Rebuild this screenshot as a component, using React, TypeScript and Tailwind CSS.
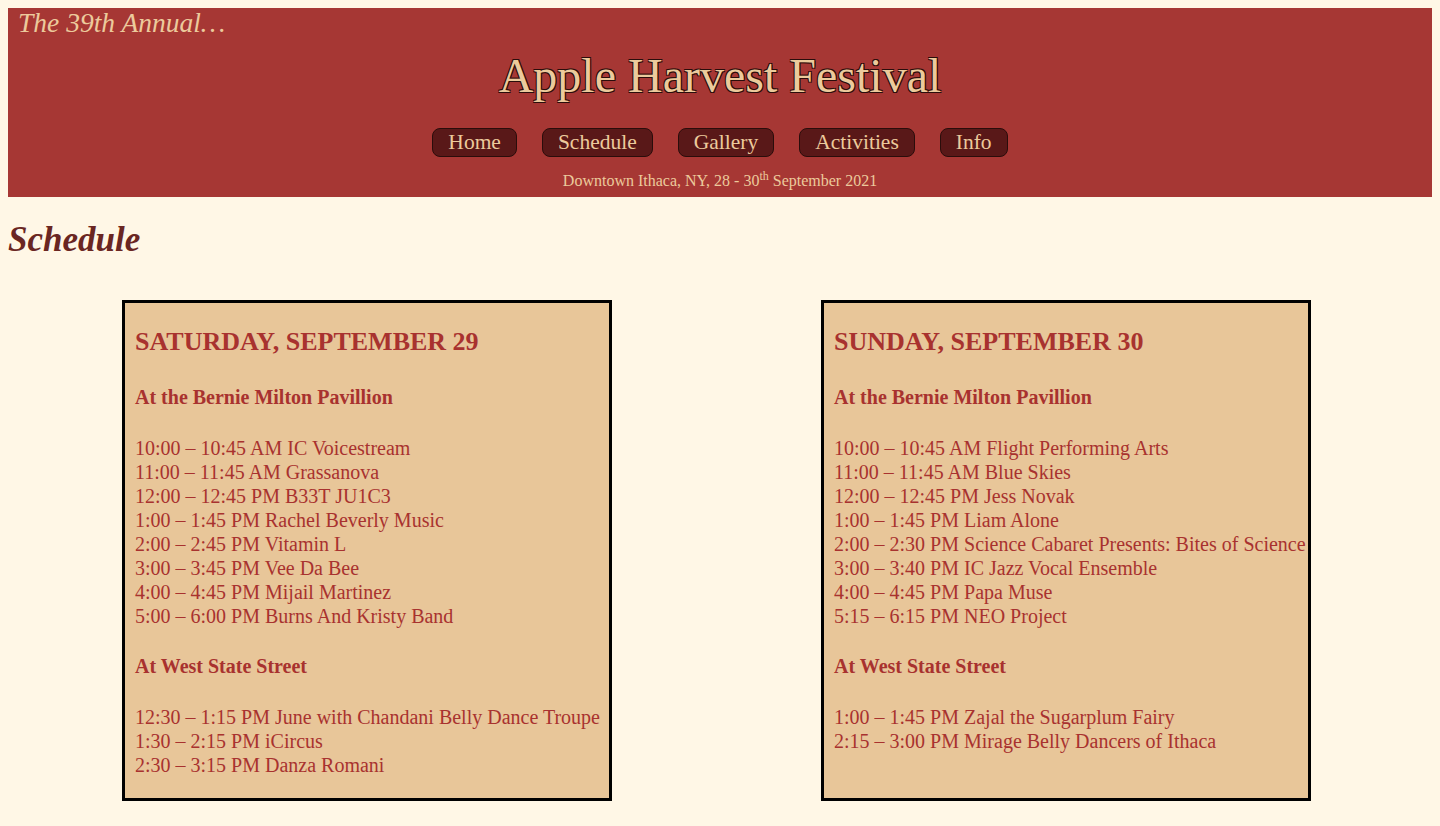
import React from "react"

const saturday = {
  title: "SATURDAY, SEPTEMBER 29",
  pavilion: [
    "10:00 – 10:45 AM IC Voicestream",
    "11:00 – 11:45 AM Grassanova",
    "12:00 – 12:45 PM B33T JU1C3",
    "1:00 – 1:45 PM Rachel Beverly Music",
    "2:00 – 2:45 PM Vitamin L",
    "3:00 – 3:45 PM Vee Da Bee",
    "4:00 – 4:45 PM Mijail Martinez",
    "5:00 – 6:00 PM Burns And Kristy Band",
  ],
  street: [
    "12:30 – 1:15 PM June with Chandani Belly Dance Troupe",
    "1:30 – 2:15 PM iCircus",
    "2:30 – 3:15 PM Danza Romani",
  ],
}

const sunday = {
  title: "SUNDAY, SEPTEMBER 30",
  pavilion: [
    "10:00 – 10:45 AM Flight Performing Arts",
    "11:00 – 11:45 AM Blue Skies",
    "12:00 – 12:45 PM Jess Novak",
    "1:00 – 1:45 PM Liam Alone",
    "2:00 – 2:30 PM Science Cabaret Presents: Bites of Science",
    "3:00 – 3:40 PM IC Jazz Vocal Ensemble",
    "4:00 – 4:45 PM Papa Muse",
    "5:15 – 6:15 PM NEO Project",
  ],
  street: [
    "1:00 – 1:45 PM Zajal the Sugarplum Fairy",
    "2:15 – 3:00 PM Mirage Belly Dancers of Ithaca",
  ],
}

const navItems = ["Home", "Schedule", "Gallery", "Activities", "Info"]

function DayCard({ day }: { day: typeof saturday }) {
  return (
    <div className="w-[490px] border-[3px] border-black bg-[#e8c699] px-[10px] pt-[4px] pb-[21px] text-[#a8322f]">
      <h2 className="mt-[20px] text-[26px] font-bold leading-[30px]">{day.title}</h2>
      <h4 className="mt-[29px] text-[20px] font-bold leading-[22px]">At the Bernie Milton Pavillion</h4>
      <div className="mt-[28px] whitespace-nowrap text-[20px] leading-[24px]">
        {day.pavilion.map((line) => (
          <div key={line}>{line}</div>
        ))}
      </div>
      <h4 className="mt-[27px] text-[20px] font-bold leading-[22px]">At West State Street</h4>
      <div className="mt-[28px] whitespace-nowrap text-[20px] leading-[24px]">
        {day.street.map((line) => (
          <div key={line}>{line}</div>
        ))}
      </div>
    </div>
  )
}

export default function App() {
  return (
    <div className="min-h-[826px] bg-[#fff7e6] p-2 font-['Liberation_Serif','Times_New_Roman',serif]">
      <header className="bg-[#a63734] pb-[7px] text-[#ecca9c]">
        <p className="pl-[10px] text-[27.5px] italic leading-[30px]">The 39th Annual…</p>
        <h1
          className="mt-[8px] text-center text-[48px] leading-[60px]"
          style={{ textShadow: "1px 1px 0 #2a0d0b, -1px -1px 0 #2a0d0b, 1px -1px 0 #2a0d0b, -1px 1px 0 #2a0d0b" }}
        >
          Apple Harvest Festival
        </h1>
        <nav className="mt-[22px] flex justify-center gap-[25px]">
          {navItems.map((item) => (
            <a
              key={item}
              href="#"
              className="rounded-[8px] border border-[#2a0d0b] bg-[#591818] px-[15px] text-[21.5px] leading-[27px]"
            >
              {item}
            </a>
          ))}
        </nav>
        <p className="mt-[15px] text-center text-[16px] leading-[18px]">
          Downtown Ithaca, NY, 28 - 30<sup className="text-[12px]">th</sup> September 2021
        </p>
      </header>

      <h2 className="mt-[23px] text-[35px] font-bold italic leading-[40px] text-[#6a2622]">Schedule</h2>

      <div className="mt-[40px] flex items-stretch gap-[209px] pl-[114px]">
        <DayCard day={saturday} />
        <DayCard day={sunday} />
      </div>
    </div>
  )
}
